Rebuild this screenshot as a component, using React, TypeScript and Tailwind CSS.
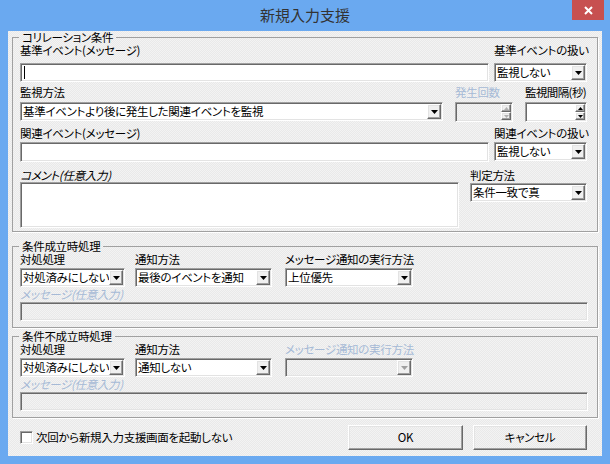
import type { ReactNode } from "react";

const sunken =
  "border border-t-[#a0a0a0] border-l-[#a0a0a0] border-b-white border-r-white shadow-[inset_1px_1px_0_#696969,inset_-1px_-1px_0_#e3e3e3]";
const raised =
  "border border-t-white border-l-white border-b-[#696969] border-r-[#696969] shadow-[inset_-1px_-1px_0_#a0a0a0,inset_1px_1px_0_#e3e3e3]";
const dither =
  "bg-[#eeeeee] bg-[image:repeating-conic-gradient(#f3f3f3_0%_25%,#e9e9e9_0%_50%)] bg-[length:2px_2px]";

function Combo({ text, className, disabled }: { text?: string; className?: string; disabled?: boolean }) {
  return (
    <div className={`${sunken} ${disabled ? "" : "bg-white"} h-[19px] flex items-center ${className ?? ""}`}>
      <span className="flex-1 pl-[2px] whitespace-nowrap overflow-hidden">{text}</span>
      <span className={`${raised} bg-[#f0f0f0] w-[14px] h-[15px] mr-[1px] flex items-center justify-center`}>
        <svg width="7" height="4" viewBox="0 0 7 4">
          <path d="M0 0h7L3.5 4z" fill={disabled ? "#a0a0a0" : "#000"} />
        </svg>
      </span>
    </div>
  );
}

function Spin({ disabled, className }: { disabled?: boolean; className?: string }) {
  const fill = disabled ? "#b0b0b0" : "#000";
  return (
    <div className={`${sunken} ${disabled ? "" : "bg-white"} h-[20px] flex ${className ?? ""}`}>
      <div className="flex-1" />
      <div className="flex flex-col w-[10px] my-[1px] mr-[1px]">
        <div className={`${raised} bg-[#f0f0f0] flex-1 flex items-center justify-center`}>
          <svg width="5" height="3" viewBox="0 0 5 3">
            <path d="M0 3h5L2.5 0z" fill={fill} />
          </svg>
        </div>
        <div className={`${raised} bg-[#f0f0f0] flex-1 flex items-center justify-center`}>
          <svg width="5" height="3" viewBox="0 0 5 3">
            <path d="M0 0h5L2.5 3z" fill={fill} />
          </svg>
        </div>
      </div>
    </div>
  );
}

function Label({ children, className }: { children: ReactNode; className?: string }) {
  return <div className={`leading-[13px] whitespace-nowrap ${className ?? ""}`}>{children}</div>;
}

function Group({ title, children, className }: { title: string; children: ReactNode; className?: string }) {
  return (
    <fieldset
      className={`mx-[4px] border border-[#a0a0a0] shadow-[1px_1px_0_#fff] pl-[7px] pr-[10px] ${className ?? ""}`}
    >
      <legend className="ml-[-1px] px-[3px] leading-[12px]">{title}</legend>
      {children}
    </fieldset>
  );
}

function ActionGroup({ title, disabledExec, notify }: { title: string; disabledExec?: boolean; notify: string }) {
  return (
    <Group title={title} className="pb-[6px]">
      <div className="flex mt-[1px]">
        <div className="flex flex-col w-[105px]">
          <Label>対処処理</Label>
          <Combo text="対処済みにしない" className="mt-[2px]" />
        </div>
        <div className="flex flex-col w-[137px] ml-[10px]">
          <Label>通知方法</Label>
          <Combo text={notify} className="mt-[2px]" />
        </div>
        <div className="flex flex-col w-[128px] ml-[13px]">
          <Label className={disabledExec ? "text-[#a6bad6]" : ""}>メッセージ通知の実行方法</Label>
          <Combo text={disabledExec ? "" : "上位優先"} disabled={disabledExec} className="mt-[2px]" />
        </div>
      </div>
      <Label className="mt-[1px] italic text-[#a6bad6]">メッセージ(任意入力)</Label>
      <div className={`${sunken} h-[19px] mt-[1px] mr-[-1px]`} />
    </Group>
  );
}

export default function App() {
  return (
    <div className="w-[610px] h-[464px] bg-[#6aa9f0] flex flex-col text-[11.5px] tracking-[-0.3px] text-black font-['Noto_Sans_CJK_JP',sans-serif] [font-feature-settings:'palt']">
      <div className="h-[31px] flex items-start shrink-0">
        <div className="flex-1 h-[31px] flex items-center justify-center pl-[38px] text-[15px] tracking-normal text-[#333333]">
          新規入力支援
        </div>
        <div className="w-[32px] h-[20px] mr-[6px] bg-[#c75050] flex items-center justify-center">
          <svg width="9" height="9" viewBox="0 0 9 9">
            <path d="M1 1l7 7M8 1l-7 7" stroke="#fff" strokeWidth="2" />
          </svg>
        </div>
      </div>

      <div className={`flex-1 mx-[8px] mb-[8px] flex flex-col ${dither}`}>
        <Group title="コリレーション条件" className="pb-[3px]">
          <div className="flex gap-[5px] mt-[1px]">
            <div className="flex-1 flex flex-col">
              <Label>基準イベント(メッセージ)</Label>
              <div className={`${sunken} bg-white h-[19px] mt-[6px] flex items-center pl-[3px]`}>
                <span className="w-px h-[13px] bg-black" />
              </div>
            </div>
            <div className="w-[93px] flex flex-col">
              <Label>基準イベントの扱い</Label>
              <Combo text="監視しない" className="mt-[6px]" />
            </div>
          </div>

          <div className="flex mt-[4px]">
            <div className="flex-1 flex flex-col">
              <Label>監視方法</Label>
              <Combo text="基準イベントより後に発生した関連イベントを監視" className="mt-[3px]" />
            </div>
            <div className="w-[58px] ml-[12px] flex flex-col">
              <Label className="text-[#a6bad6]">発生回数</Label>
              <Spin disabled className="mt-[3px]" />
            </div>
            <div className="w-[62px] ml-[12px] flex flex-col">
              <Label className="tracking-[-0.6px]">監視間隔(秒)</Label>
              <Spin className="mt-[3px]" />
            </div>
          </div>

          <div className="flex gap-[5px] mt-[5px]">
            <div className="flex-1 flex flex-col">
              <Label>関連イベント(メッセージ)</Label>
              <div className={`${sunken} bg-white h-[20px] mt-[2px]`} />
            </div>
            <div className="w-[93px] flex flex-col">
              <Label>関連イベントの扱い</Label>
              <Combo text="監視しない" className="mt-[2px]" />
            </div>
          </div>

          <div className="flex mt-[7px]">
            <div className="flex-1 flex flex-col">
              <Label className="italic">コメント(任意入力)</Label>
              <div className={`${sunken} bg-white h-[46px]`} />
            </div>
            <div className="w-[117px] ml-[11px] flex flex-col">
              <Label>判定方法</Label>
              <Combo text="条件一致で真" className="mt-[1px]" />
            </div>
          </div>
        </Group>

        <div className="mt-[8px]">
          <ActionGroup title="条件成立時処理" notify="最後のイベントを通知" />
        </div>
        <div className="mt-[2px]">
          <ActionGroup title="条件不成立時処理" notify="通知しない" disabledExec />
        </div>

        <div className="flex items-center mt-[7px] pl-[12px] pr-[15px]">
          <div className={`${sunken} bg-white w-[13px] h-[13px]`} />
          <span className="ml-[3px] flex-1">次回から新規入力支援画面を起動しない</span>
          <button className={`${raised} ${dither} w-[115px] h-[25px] flex items-center justify-center`}>OK</button>
          <button className={`${raised} ${dither} w-[114px] h-[25px] ml-[10px] flex items-center justify-center`}>
            キャンセル
          </button>
        </div>
      </div>
    </div>
  );
}
